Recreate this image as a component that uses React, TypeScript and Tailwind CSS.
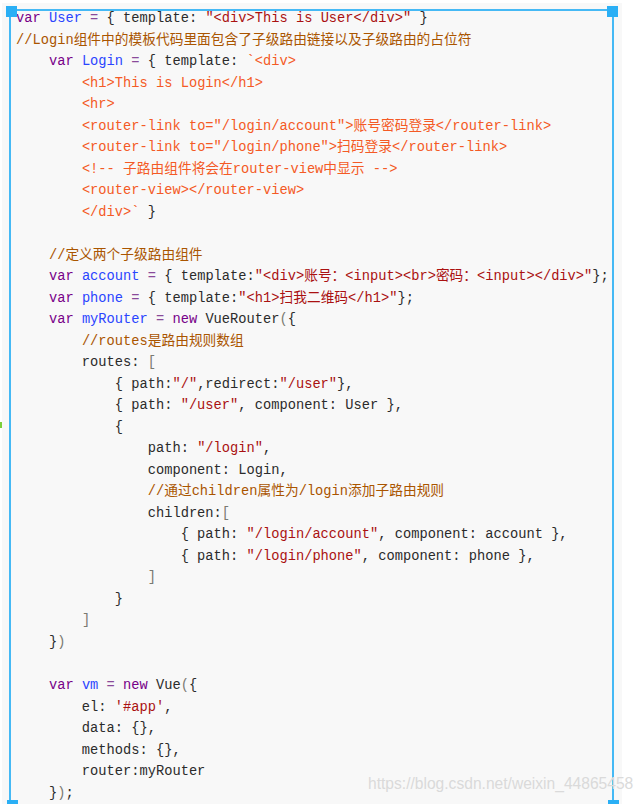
import React from "react";

type Tok = [string, string];

const cls: Record<string, string> = {
  k: "text-[#770088]",
  d: "text-[#2a45ff]",
  s: "text-[#aa1111]",
  s2: "text-[#f45a25]",
  c: "text-[#aa5500]",
  o: "text-[#8a4a9a]",
  b: "text-[#7a7a72]",
  t: "text-[#2b2b2b]",
};

const I = (n: number) => " ".repeat(n);

const lines: Tok[][] = [
  [["k", "var"], ["t", " "], ["d", "User"], ["t", " "], ["o", "="], ["t", " { template: "], ["s", '"<div>This is User</div>"'], ["t", " }"]],
  [["c", "//Login组件中的模板代码里面包含了子级路由链接以及子级路由的占位符"]],
  [["t", I(4)], ["k", "var"], ["t", " "], ["d", "Login"], ["t", " "], ["o", "="], ["t", " { template: "], ["s2", "`<div>"]],
  [["t", I(8)], ["s2", "<h1>This is Login</h1>"]],
  [["t", I(8)], ["s2", "<hr>"]],
  [["t", I(8)], ["s2", '<router-link to="/login/account">账号密码登录</router-link>']],
  [["t", I(8)], ["s2", '<router-link to="/login/phone">扫码登录</router-link>']],
  [["t", I(8)], ["s2", "<!-- 子路由组件将会在router-view中显示 -->"]],
  [["t", I(8)], ["s2", "<router-view></router-view>"]],
  [["t", I(8)], ["s2", "</div>`"], ["t", " }"]],
  [["t", " "]],
  [["t", I(4)], ["c", "//定义两个子级路由组件"]],
  [["t", I(4)], ["k", "var"], ["t", " "], ["d", "account"], ["t", " "], ["o", "="], ["t", " { template:"], ["s", '"<div>账号：<input><br>密码：<input></div>"'], ["t", "};"]],
  [["t", I(4)], ["k", "var"], ["t", " "], ["d", "phone"], ["t", " "], ["o", "="], ["t", " { template:"], ["s", '"<h1>扫我二维码</h1>"'], ["t", "};"]],
  [["t", I(4)], ["k", "var"], ["t", " "], ["d", "myRouter"], ["t", " "], ["o", "="], ["t", " "], ["k", "new"], ["t", " VueRouter"], ["b", "("], ["t", "{"]],
  [["t", I(8)], ["c", "//routes是路由规则数组"]],
  [["t", I(8) + "routes: "], ["b", "["]],
  [["t", I(12) + "{ path:"], ["s", '"/"'], ["t", ",redirect:"], ["s", '"/user"'], ["t", "},"]],
  [["t", I(12) + "{ path: "], ["s", '"/user"'], ["t", ", component: User },"]],
  [["t", I(12) + "{"]],
  [["t", I(16) + "path: "], ["s", '"/login"'], ["t", ","]],
  [["t", I(16) + "component: Login,"]],
  [["t", I(16)], ["c", "//通过children属性为/login添加子路由规则"]],
  [["t", I(16) + "children:"], ["b", "["]],
  [["t", I(20) + "{ path: "], ["s", '"/login/account"'], ["t", ", component: account },"]],
  [["t", I(20) + "{ path: "], ["s", '"/login/phone"'], ["t", ", component: phone },"]],
  [["t", I(16)], ["b", "]"]],
  [["t", I(12) + "}"]],
  [["t", I(8)], ["b", "]"]],
  [["t", I(4) + "}"], ["b", ")"]],
  [["t", " "]],
  [["t", I(4)], ["k", "var"], ["t", " "], ["d", "vm"], ["t", " "], ["o", "="], ["t", " "], ["k", "new"], ["t", " Vue"], ["b", "("], ["t", "{"]],
  [["t", I(8) + "el: "], ["s", "'#app'"], ["t", ","]],
  [["t", I(8) + "data: {},"]],
  [["t", I(8) + "methods: {},"]],
  [["t", I(8) + "router:myRouter"]],
  [["t", I(4) + "}"], ["b", ")"], ["t", ";"]],
];

function Handle({ pos }: { pos: string }) {
  return <div className={`absolute w-[11px] h-[11px] bg-[#2aaff5] ${pos}`} />;
}

export default function App() {
  return (
    <div className="relative w-[644px] h-[804px] bg-white overflow-hidden">
      <div className="pt-[3px] pl-[2px]">
        <div
          className="flex flex-col w-[620px] h-[801px] bg-[#f8f8f8] pt-[5px] pl-[14px] text-[13.73px] leading-[21.53px] whitespace-pre"
          style={{ fontFamily: '"Liberation Mono", "Noto Sans CJK SC", monospace' }}
        >
          {lines.map((ln, i) => (
            <div key={i} className="h-[21.53px]">
              {ln.map(([c, txt], j) => (
                <span key={j} className={cls[c]}>
                  {txt}
                </span>
              ))}
            </div>
          ))}
        </div>
      </div>

      {/* selection frame overlay with corner handles */}
      <div className="absolute left-[9px] top-[9px] w-[605px] h-[800px] border-l-2 border-r-2 border-t-2 border-[#45b9f5] pointer-events-none">
        <Handle pos="-left-[5px] -top-[5px]" />
        <Handle pos="-right-[6px] -top-[5px]" />
        <Handle pos="-left-[4px] top-[789px]" />
        <Handle pos="-right-[7px] top-[789px]" />
      </div>

      {/* small green marker */}
      <div className="absolute left-0 top-[422px] w-[2px] h-[6px] bg-[#7ccf3a]" />

      {/* watermark */}
      <div
        className="absolute left-[368px] top-[774px] text-[15.6px] leading-[20px] text-[#dadada]"
        style={{ fontFamily: '"Liberation Sans", Arial, sans-serif' }}
      >
        https://blog.csdn.net/weixin_44865458
      </div>
    </div>
  );
}
